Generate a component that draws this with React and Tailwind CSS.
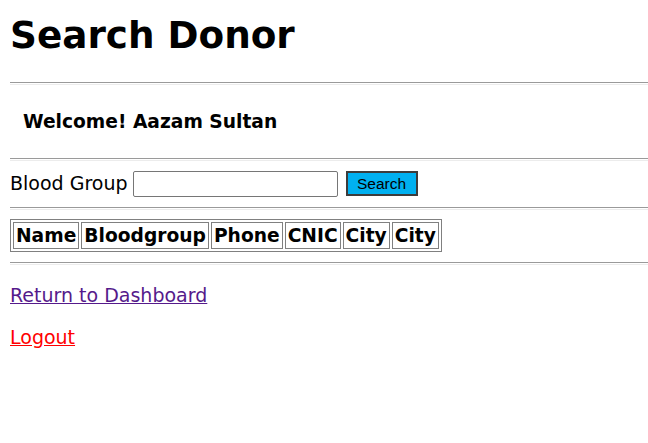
export default function App() {
  const cols = ['Name', 'Bloodgroup', 'Phone', 'CNIC', 'City', 'City']

  return (
    <div className="min-h-[443px] bg-white px-[10px] text-black font-['DejaVu_Sans',Verdana,sans-serif] text-[19px] leading-[22px] overflow-hidden">
      <h1 className="pt-[13px] text-[37.33px] leading-[44px] font-bold">Search Donor</h1>

      <div className="mt-[25px] -mr-[10px] h-[3px] border-t border-b border-t-[#9a9a9a] border-b-[#ececec]" />

      <h4 className="mt-[26px] pl-[13px] text-[18.67px] font-bold">Welcome! Aazam Sultan</h4>

      <div className="mt-[25px] -mr-[10px] h-[3px] border-t border-b border-t-[#9a9a9a] border-b-[#ececec]" />

      <form className="mt-[10px] flex items-start" onSubmit={(e) => e.preventDefault()}>
        <label className="block pt-[1px]">Blood Group</label>
        <input
          type="text"
          className="ml-[5px] h-[26px] w-[205px] rounded-[2px] border border-[#767676] bg-white px-[2px] outline-none"
        />
        <button
          type="submit"
          className="ml-[8px] h-[25px] w-[72px] border-2 border-[#3c3c3c] bg-[#00b0f0] font-['Liberation_Sans',Arial,sans-serif] text-[15.5px] leading-[21px]"
        >
          Search
        </button>
      </form>

      <div className="mt-[10px] -mr-[10px] h-[3px] border-t border-b border-t-[#9a9a9a] border-b-[#ececec]" />

      <table className="mt-[9px] border border-[#808080] border-separate border-spacing-[2px] text-[18.67px]">
        <thead>
          <tr>
            {cols.map((c, i) => (
              <th key={i} className="border border-[#808080] px-[2px] py-[1.5px] font-bold leading-[22px]">
                {c}
              </th>
            ))}
          </tr>
        </thead>
      </table>

      <div className="mt-[10px] -mr-[10px] h-[3px] border-t border-b border-t-[#9a9a9a] border-b-[#ececec]" />

      <div className="mt-[19px]">
        <a href="#" className="text-[#551a8b] underline">Return to Dashboard</a>
      </div>
      <div className="mt-[20px]">
        <a href="#" className="text-[#ff0000] underline">Logout</a>
      </div>
    </div>
  )
}
